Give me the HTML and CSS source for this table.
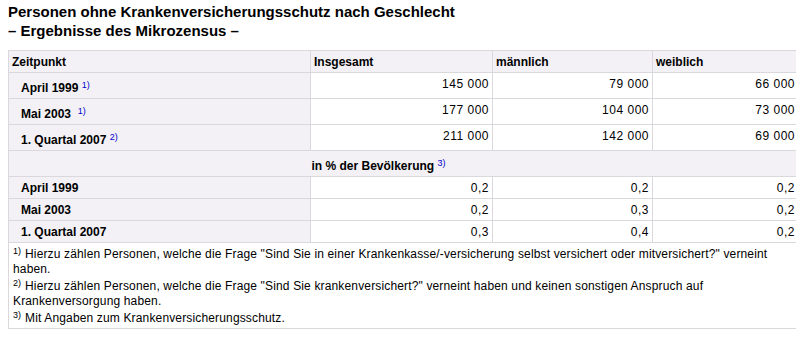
FILE: index.html
```html
<!DOCTYPE html>
<html lang="de">
<head>
<meta charset="utf-8">
<title>Personen ohne Krankenversicherungsschutz</title>
<link rel="stylesheet" href="styles.css">
</head>
<body>
<h1 class="title">Personen ohne Krankenversicherungsschutz nach Geschlecht<br>– Ergebnisse des Mikrozensus –</h1>
<table class="stats">
  <colgroup>
    <col class="w1"><col class="w2"><col class="w3"><col class="w4">
  </colgroup>
  <tr class="head">
    <th>Zeitpunkt</th>
    <th>Insgesamt</th>
    <th>männlich</th>
    <th>weiblich</th>
  </tr>
  <tr class="row-tall">
    <th class="label">April 1999 <sup class="fn">1)</sup></th>
    <td>145 000</td><td>79 000</td><td>66 000</td>
  </tr>
  <tr class="row-tall">
    <th class="label">Mai 2003 &nbsp;<sup class="fn">1)</sup></th>
    <td>177 000</td><td>104 000</td><td>73 000</td>
  </tr>
  <tr class="row-tall">
    <th class="label">1. Quartal 2007 <sup class="fn">2)</sup></th>
    <td>211 000</td><td>142 000</td><td>69 000</td>
  </tr>
  <tr class="row-tall">
    <th class="sub-empty"></th>
    <th class="sub-text" colspan="3">in % der Bevölkerung <sup class="fn">3)</sup></th>
  </tr>
  <tr class="row-short">
    <th class="label">April 1999</th>
    <td>0,2</td><td>0,2</td><td>0,2</td>
  </tr>
  <tr class="row-short">
    <th class="label">Mai 2003</th>
    <td>0,2</td><td>0,3</td><td>0,2</td>
  </tr>
  <tr class="row-short">
    <th class="label">1. Quartal 2007</th>
    <td>0,3</td><td>0,4</td><td>0,2</td>
  </tr>
  <tr>
    <td class="notes" colspan="4">
      <div class="note"><sup class="mark">1)</sup><span class="line">Hierzu zählen Personen, welche die Frage "Sind Sie in einer Krankenkasse/-versicherung selbst versichert oder mitversichert?" verneint</span><br><span class="line">haben.</span></div>
      <div class="note"><sup class="mark">2)</sup><span class="line">Hierzu zählen Personen, welche die Frage "Sind Sie krankenversichert?" verneint haben und keinen sonstigen Anspruch auf</span><br><span class="line">Krankenversorgung haben.</span></div>
      <div class="note"><sup class="mark">3)</sup><span class="line">Mit Angaben zum Krankenversicherungsschutz.</span></div>
    </td>
  </tr>
</table>
</body>
</html>
```
FILE: styles.css
```css
html, body {
  background: #ffffff;
}
body {
  margin: 0 8px;
  font-family: "Liberation Sans", Arial, sans-serif;
  color: #000;
}
.title {
  margin: 0;
  padding-top: 2px;
  font-size: 15px;
  line-height: 19px;
  font-weight: bold;
}
.stats {
  margin-top: 10px;
  width: 790px;
  border-collapse: collapse;
  font-size: 12px;
  table-layout: fixed;
}
.w1 { width: 302px; }
.w2 { width: 182px; }
.w3 { width: 160px; }
.w4 { width: 146px; }
.stats th, .stats td {
  border: 1px solid #dad8dd;
  padding: 0 3px;
  line-height: 14px;
  vertical-align: middle;
}
.stats th {
  background: #f3f1f5;
  text-align: left;
  font-weight: bold;
}
.stats td {
  background: #fff;
  text-align: right;
  letter-spacing: 0.5px;
  padding-right: 3px;
}
.head { height: 22px; }
.row-tall { height: 26px; }
.row-short { height: 22px; }
.stats th.label {
  padding-left: 12px;
}
.row-tall th {
  padding-top: 4px;
}
.row-tall td {
  padding-bottom: 4px;
}
.fn {
  color: #0000cc;
  font-weight: normal;
  font-size: 9px;
  line-height: 0;
  vertical-align: 4px;
}
.stats th.sub-empty {
  border-right: none;
}
.stats th.sub-text {
  border-left: none;
  padding-left: 1px;
}
.stats td.notes {
  text-align: left;
  padding: 2px 4px 2px 4px;
  line-height: 15px;
  letter-spacing: 0.15px;
}
.note {
  margin-top: 2px;
}
.line {
  white-space: nowrap;
}
.mark {
  display: inline-block;
  font-size: 9px;
  line-height: 9px;
  vertical-align: 4px;
  letter-spacing: 0;
  margin-right: 4px;
}
```
